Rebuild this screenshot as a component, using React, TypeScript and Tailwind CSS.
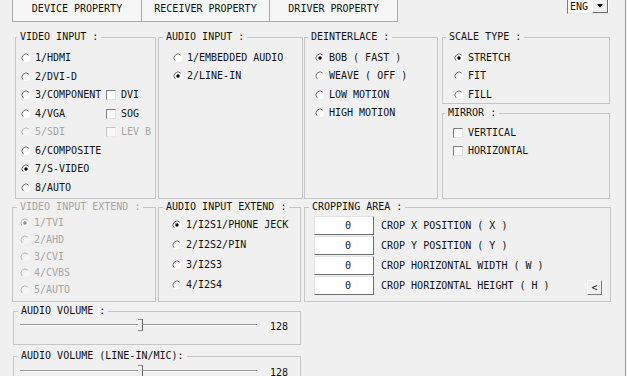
import React from "react";

function RadioIcon({ checked, disabled }: { checked?: boolean; disabled?: boolean }) {
  const stroke = disabled ? "#b9b9b9" : "#737373";
  return (
    <svg width="10" height="10" viewBox="0 0 10 10" className="shrink-0">
      <circle cx="5" cy="5" r="4" fill={disabled ? "#f5f5f5" : "#fdfdfd"} />
      <path d="M7.83 2.17 A4 4 0 0 0 2.17 7.83" fill="none" stroke={stroke} strokeWidth="1" />
      {checked && <circle cx="5" cy="5" r="1.7" fill={disabled ? "#8d8d8d" : "#000000"} />}
    </svg>
  );
}

function CheckBox({ disabled }: { disabled?: boolean }) {
  return (
    <span
      className={
        disabled
          ? "w-[10px] h-[10px] shrink-0 bg-[#f7f7f7] border-t border-l border-r border-b border-t-[#c4c4c4] border-l-[#c4c4c4] border-r-[#ececec] border-b-[#ececec]"
          : "w-[10px] h-[10px] shrink-0 bg-white border-t border-l border-r border-b border-t-[#808080] border-l-[#808080] border-r-[#e4e4e4] border-b-[#e4e4e4]"
      }
    />
  );
}

function Radio({
  label,
  checked,
  disabled,
  rowClass,
}: {
  label: string;
  checked?: boolean;
  disabled?: boolean;
  rowClass: string;
}) {
  return (
    <div className={`flex items-center gap-[4px] ${rowClass}`}>
      <RadioIcon checked={checked} disabled={disabled} />
      <span className={disabled ? "text-[#a6a6a6]" : ""}>{label}</span>
    </div>
  );
}

function Group({
  title,
  className,
  titleMl,
  disabled,
  children,
}: {
  title: string;
  className: string;
  titleMl: string;
  disabled?: boolean;
  children?: React.ReactNode;
}) {
  return (
    <div className={`border border-[#c6c6c6] ${className}`}>
      <div
        className={`-mt-[7px] w-fit bg-[#f0f0f0] px-[3px] leading-[12px] ${titleMl} ${
          disabled ? "text-[#a6a6a6]" : ""
        }`}
      >
        {title}
      </div>
      {children}
    </div>
  );
}

function Slider({ value }: { value: string }) {
  return (
    <div className="flex items-center">
      <div className="relative w-[237px] h-[2px] border-t border-b border-t-[#9a9a9a] border-b-white">
        <div className="absolute left-[118px] -top-[6px] w-[5px] h-[12px] bg-[#f0f0f0] border-t border-r border-b border-t-[#8c8c8c] border-r-[#666666] border-b-[#8c8c8c]" />
      </div>
      <span className="ml-[13px] pt-[3px]">{value}</span>
    </div>
  );
}

export default function App() {
  const viRows: { l: string; cb?: string; checked?: boolean; disabled?: boolean }[] = [
    { l: "1/HDMI" },
    { l: "2/DVI-D" },
    { l: "3/COMPONENT", cb: "DVI" },
    { l: "4/VGA", cb: "SOG" },
    { l: "5/SDI", cb: "LEV B", disabled: true },
    { l: "6/COMPOSITE" },
    { l: "7/S-VIDEO", checked: true },
    { l: "8/AUTO" },
  ];
  const crop = [
    "CROP X POSITION ( X )",
    "CROP Y POSITION ( Y )",
    "CROP HORIZONTAL WIDTH ( W )",
    "CROP HORIZONTAL HEIGHT ( H )",
  ];
  return (
    <div className="w-[627px] h-[376px] overflow-hidden bg-[#f0f0f0] font-['DejaVu_Sans_Mono',monospace] text-[10px] leading-[12px] text-[#111111]">
      <div className="w-[626px] h-full border-r border-[#9c9c9c] flex flex-col">
        {/* Tabs row */}
        <div className="flex h-[22px] shrink-0 pl-[12px]">
          <div className="w-[129px] h-[22px] border-l border-b border-[#a9a9a9] bg-[#f6f6f6] flex justify-center pt-[3px]">
            DEVICE PROPERTY
          </div>
          <div className="w-[128px] h-[22px] border-l border-b border-[#a9a9a9] bg-[#f6f6f6] flex justify-center pt-[3px]">
            RECEIVER PROPERTY
          </div>
          <div className="w-[129px] h-[22px] border-l border-r border-b border-[#a9a9a9] bg-[#f6f6f6] flex justify-center pt-[3px]">
            DRIVER PROPERTY
          </div>
          <div className="ml-auto mr-[16px] w-[42px] h-[14px] flex bg-white border-l border-b border-l-[#7a7a7a] border-b-[#e6e6e6]">
            <span className="pl-[2px] pt-[1px] flex-1">ENG</span>
            <div className="w-[16px] h-[13px] bg-[#f0f0f0] border-r border-b border-r-[#6e6e6e] border-b-[#6e6e6e] border-l border-l-white flex items-center justify-center mr-[1px]">
              <svg width="6" height="4" viewBox="0 0 6 4">
                <path d="M0 0 H6 L3 3.5 Z" fill="#000" />
              </svg>
            </div>
          </div>
        </div>

        {/* Row 1 */}
        <div className="flex mt-[15px] pl-[15px] h-[162px] shrink-0">
          <Group title="VIDEO INPUT :" className="w-[141px] h-[162px]" titleMl="ml-[1px]">
            <div className="mt-[6px] pl-[5px]">
              {viRows.map((r) => (
                <div key={r.l} className="flex items-center h-[18.5px]">
                  <div className="w-[85px]">
                    <Radio label={r.l} checked={r.checked} disabled={r.disabled} rowClass="h-[18.5px]" />
                  </div>
                  {r.cb && (
                    <div className="flex items-center gap-[5px]">
                      <CheckBox disabled={r.disabled} />
                      <span className={r.disabled ? "text-[#a6a6a6]" : ""}>{r.cb}</span>
                    </div>
                  )}
                </div>
              ))}
            </div>
          </Group>
          <Group title="AUDIO INPUT :" className="ml-[2px] w-[145px] h-[162px]" titleMl="ml-[4px]">
            <div className="mt-[6px] pl-[14px]">
              <Radio label="1/EMBEDDED AUDIO" rowClass="h-[18.33px]" />
              <Radio label="2/LINE-IN" checked rowClass="h-[18.33px]" />
            </div>
          </Group>
          <Group title="DEINTERLACE :" className="ml-[1px] w-[134px] h-[162px]" titleMl="ml-[3px]">
            <div className="mt-[6px] pl-[10px]">
              <Radio label="BOB ( FAST )" checked rowClass="h-[18.33px]" />
              <Radio label="WEAVE ( OFF )" rowClass="h-[18.33px]" />
              <Radio label="LOW MOTION" rowClass="h-[18.33px]" />
              <Radio label="HIGH MOTION" rowClass="h-[18.33px]" />
            </div>
          </Group>
          <div className="ml-[4px] w-[168px] flex flex-col">
            <Group title="SCALE TYPE :" className="w-[168px] h-[67px]" titleMl="ml-[3px]">
              <div className="mt-[6px] pl-[11px]">
                <Radio label="STRETCH" checked rowClass="h-[18.33px]" />
                <Radio label="FIT" rowClass="h-[18.33px]" />
                <Radio label="FILL" rowClass="h-[18.33px]" />
              </div>
            </Group>
            <Group title="MIRROR :" className="mt-[9px] w-[168px] h-[86px]" titleMl="ml-[2px]">
              <div className="mt-[5px] pl-[10px]">
                <div className="flex items-center gap-[5px] h-[18.33px]">
                  <CheckBox />
                  <span>VERTICAL</span>
                </div>
                <div className="flex items-center gap-[5px] h-[18.33px]">
                  <CheckBox />
                  <span>HORIZONTAL</span>
                </div>
              </div>
            </Group>
          </div>
        </div>

        {/* Row 2 */}
        <div className="flex mt-[8px] pl-[12px] h-[95px] shrink-0">
          <Group title="VIDEO INPUT EXTEND :" className="w-[144px] h-[95px]" titleMl="ml-[4px]" disabled>
            <div className="mt-[2px] pl-[7px]">
              <Radio label="1/TVI" checked disabled rowClass="h-[16.7px]" />
              <Radio label="2/AHD" disabled rowClass="h-[16.7px]" />
              <Radio label="3/CVI" disabled rowClass="h-[16.7px]" />
              <Radio label="4/CVBS" disabled rowClass="h-[16.7px]" />
              <Radio label="5/AUTO" disabled rowClass="h-[16.7px]" />
            </div>
          </Group>
          <Group title="AUDIO INPUT EXTEND :" className="ml-[2px] w-[143px] h-[95px]" titleMl="ml-[4px]">
            <div className="mt-[2px] pl-[13px]">
              <Radio label="1/I2S1/PHONE JECK" checked rowClass="h-[20px]" />
              <Radio label="2/I2S2/PIN" rowClass="h-[20px]" />
              <Radio label="3/I2S3" rowClass="h-[20px]" />
              <Radio label="4/I2S4" rowClass="h-[20px]" />
            </div>
          </Group>
          <Group title="CROPPING AREA :" className="ml-[3px] w-[307px] h-[95px]" titleMl="ml-[4px]">
            <div className="mt-[3px] pl-[9px] flex flex-col gap-[1px]">
              {crop.map((c, i) => (
                <div key={c} className="flex items-center h-[19px]">
                  <div className="w-[60px] h-[19px] bg-white border-t border-l border-r border-b border-t-[#e2e2e2] border-l-[#e2e2e2] border-r-[#6d6d6d] border-b-[#6d6d6d] flex items-center justify-center pl-[8px]">
                    0
                  </div>
                  <span className="ml-[7px]">{c}</span>
                  {i === 3 && (
                    <div className="ml-auto mr-[8px] self-end w-[15px] h-[15px] bg-[#f0f0f0] border-t border-l border-r border-b border-t-white border-l-white border-r-[#7a7a7a] border-b-[#7a7a7a] flex items-center justify-center">
                      &lt;
                    </div>
                  )}
                </div>
              ))}
            </div>
          </Group>
        </div>

        {/* Row 3 */}
        <div className="flex flex-col mt-[9px] pl-[13px]">
          <Group title="AUDIO VOLUME :" className="w-[288px] h-[34px]" titleMl="ml-[4px]">
            <div className="pl-[6px] h-[16px] flex items-center">
              <Slider value="128" />
            </div>
          </Group>
          <Group title="AUDIO VOLUME (LINE-IN/MIC):" className="mt-[11px] w-[288px] h-[40px]" titleMl="ml-[4px]">
            <div className="pl-[6px] h-[18px] flex items-center">
              <Slider value="128" />
            </div>
          </Group>
        </div>
      </div>
    </div>
  );
}
